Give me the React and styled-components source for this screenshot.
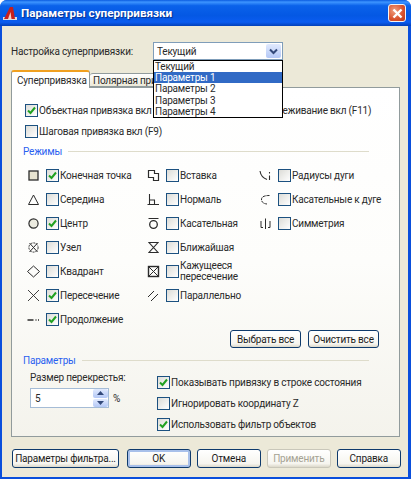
import React from "react";
import styled, { createGlobalStyle } from "styled-components";

const Global = createGlobalStyle`
  html, body { margin: 0; padding: 0; background: #fff; }
  body { font-family: Roboto, "Liberation Sans", Arial, sans-serif; font-size: 10px; letter-spacing: -0.2px; color: #2a2a2a; }
`;

const Window = styled.div`
  width: 411px;
  height: 479px;
  box-sizing: border-box;
  display: flex;
  flex-direction: column;
  border-radius: 7px 7px 0 0;
  background: #0a4fdc;
  padding: 0 3px 2px 2px;
  overflow: hidden;
`;

const TitleBar = styled.div`
  height: 26px;
  flex: none;
  margin: 0 -3px 0 -2px;
  padding: 0 5px 0 3px;
  display: flex;
  align-items: center;
  gap: 4px;
  background: linear-gradient(180deg, #0a5ce0 0%, #3d95ff 8%, #0a62ea 22%, #0458e4 60%, #0a5cf0 85%, #0340b8 100%);
`;

const Title = styled.span`
  flex: 1;
  color: #fff;
  font-size: 11.7px;
  font-weight: bold;
  letter-spacing: 0;
  text-shadow: 1px 1px 1px #0a2f8c;
`;

const CloseButton = styled.div`
  width: 18px;
  height: 18px;
  box-sizing: border-box;
  border: 1px solid #f4f4f4;
  border-radius: 3px;
  background: radial-gradient(circle at 35% 35%, #f0a080, #d8512c 60%, #b83a1c);
  display: flex;
  align-items: center;
  justify-content: center;
`;

const Body = styled.div`
  flex: 1;
  background: #ece9d8;
  padding: 16px 8px 0 9px;
  display: flex;
  flex-direction: column;
`;

const PresetRow = styled.div`
  display: flex;
  align-items: center;
  height: 18px;
`;

const PresetLabel = styled.label`
  width: 142px;
`;

const Combo = styled.div`
  position: relative;
  width: 130px;
  height: 18px;
  box-sizing: border-box;
  border: 1px solid #7f9db9;
  background: #fff;
  display: flex;
  align-items: center;
  padding-left: 3px;
  justify-content: space-between;
`;

const ComboArrow = styled.div`
  width: 15px;
  height: 14px;
  margin-right: 1px;
  border-radius: 2px;
  background: linear-gradient(180deg, #e1eafe, #b4c8f6);
  display: flex;
  align-items: center;
  justify-content: center;
`;

const DropList = styled.ul`
  position: absolute;
  left: -1px;
  top: 17px;
  width: 130px;
  height: 58px;
  box-sizing: border-box;
  margin: 0;
  padding: 0;
  list-style: none;
  background: #fff;
  border: 1px solid #000;
  z-index: 2;
`;

const DropItem = styled.li`
  height: 11.2px;
  line-height: 11px;
  padding-left: 1px;
  background: ${(p) => (p.$active ? "#316ac5" : "transparent")};
  color: ${(p) => (p.$active ? "#fff" : "#2a2a2a")};
`;

const Tabs = styled.div`
  display: flex;
  align-items: flex-start;
  height: 17px;
  margin-top: 10px;
  position: relative;
  z-index: 1;
`;

const Tab = styled.div`
  box-sizing: border-box;
  height: ${(p) => (p.$active ? "18px" : "14px")};
  width: ${(p) => (p.$active ? "79px" : "110px")};
  margin-top: ${(p) => (p.$active ? "0" : "3px")};
  padding: ${(p) => (p.$active ? "3px 0 0 5px" : "1px 0 0 3px")};
  border: 1px solid #919b9c;
  border-bottom: ${(p) => (p.$active ? "none" : "1px solid #919b9c")};
  border-left: ${(p) => (p.$active ? "1px solid #919b9c" : "none")};
  border-top: ${(p) => (p.$active ? "2px solid #f0a020" : "1px solid #919b9c")};
  border-radius: 3px 3px 0 0;
  background: ${(p) => (p.$active ? "#fff" : "linear-gradient(180deg, #fff, #ece9d8)")};
  white-space: nowrap;
  overflow: hidden;
`;

const Panel = styled.div`
  height: 350px;
  box-sizing: border-box;
  flex: none;
  border: 1px solid #919b9c;
  background: linear-gradient(180deg, #fff 0%, #fdfdfb 50%, #f4f3ec 100%);
  padding: 15px 0 0 13px;
  display: flex;
  flex-direction: column;
`;

const TopRow = styled.div`
  display: flex;
  height: 14px;
  margin-bottom: ${(p) => p.$gap}px;
`;

const Check = styled.div`
  display: flex;
  align-items: center;
  gap: 1px;
  width: ${(p) => p.$width || "auto"};
  white-space: nowrap;
`;

const Box = styled.span`
  flex: none;
  width: 11px;
  height: 11px;
  border: 1px solid #1c5180;
  background: linear-gradient(135deg, #dcdcd7, #fff);
  display: flex;
  align-items: center;
  justify-content: center;
`;

const SectionHead = styled.div`
  display: flex;
  align-items: center;
  height: 13px;
  flex: none;
  color: #2a5ff0;
  margin: ${(p) => p.$top || 0}px 30px 0 -2px;
`;

const SectionLine = styled.div`
  margin-left: ${(p) => p.$gap}px;
  flex: 1;
  height: 1px;
  background: #dedccb;
`;

const Modes = styled.div`
  display: grid;
  grid-template-columns: 120px 112px 1fr;
  grid-auto-rows: 24px;
  margin-top: 5px;
  height: 168px;
  flex: none;
`;

const Mode = styled.div`
  display: flex;
  align-items: center;
  gap: 6px;
  padding-left: 2px;
  grid-column: ${(p) => p.$col};
  grid-row: ${(p) => p.$row};
`;

const ModeIcon = styled.svg`
  flex: none;
  width: 13px;
  height: 13px;
  fill: none;
  stroke: #2c2c2c;
`;

const TwoLine = styled.span`
  display: block;
  line-height: 11px;
  white-space: normal;
  width: 90px;
`;

const SelectRow = styled.div`
  display: flex;
  justify-content: flex-end;
  gap: 7px;
  padding-right: 20px;
  margin-top: -1px;
`;

const Button = styled.button`
  box-sizing: border-box;
  flex: none;
  width: ${(p) => p.$width}px;
  height: ${(p) => p.$height || 19}px;
  margin-right: ${(p) => p.$after || 0}px;
  padding: 0;
  font: inherit;
  letter-spacing: inherit;
  color: ${(p) => (p.disabled ? "#a5a293" : "#1c1c1c")};
  border: 1px solid ${(p) => (p.disabled ? "#c9c7ba" : "#0e3a6c")};
  border-radius: 3px;
  background: linear-gradient(180deg, #fff 0%, #f6f5ef 80%, #dcd8ca 100%);
  box-shadow: ${(p) => (p.$default ? "inset 0 0 0 2px #a8c0ea" : "none")};
  white-space: nowrap;
`;

const ParamsRow = styled.div`
  display: flex;
  margin-top: 5px;
`;

const CrossSize = styled.div`
  width: 132px;
  box-sizing: border-box;
  padding-left: 5px;
  display: flex;
  flex-direction: column;
  gap: 5px;
`;

const SpinRow = styled.div`
  display: flex;
  align-items: center;
  gap: 4px;
`;

const Spin = styled.div`
  box-sizing: border-box;
  width: 79px;
  height: 20px;
  border: 1px solid #a5bcd6;
  background: #fff;
  padding-left: 4px;
  display: flex;
  align-items: center;
  justify-content: space-between;
`;

const SpinBtns = styled.div`
  width: 15px;
  height: 18px;
  display: flex;
  flex-direction: column;
  gap: 1px;
`;

const SpinBtn = styled.div`
  flex: 1;
  border-radius: 2px;
  background: linear-gradient(180deg, #e1eafe, #b4c8f6);
  display: flex;
  align-items: center;
  justify-content: center;
`;

const OptionList = styled.div`
  display: flex;
  flex-direction: column;
  gap: 8px;
  margin-top: 4px;
`;

const Footer = styled.div`
  display: flex;
  margin-top: 12px;
  padding-left: 1px;
  gap: 6.5px;
`;

const Tick = () => (
  <svg width="9" height="9" viewBox="0 0 9 9">
    <path d="M1 4.5 L3.5 7 L8 1.5" fill="none" stroke="#21a121" strokeWidth="2" />
  </svg>
);

const CheckItem = ({ checked, children, width }) => (
  <Check $width={width}>
    <Box>{checked && <Tick />}</Box>
    <span>{children}</span>
  </Check>
);

const icons = {
  end: <rect x="2" y="2" width="9" height="9" fill="#e8e4d0" strokeWidth="1.3" />,
  mid: <path d="M6.5 2 L11.5 11.5 H1.5 Z" />,
  center: <circle cx="6.5" cy="6.5" r="4.6" fill="#ecebe0" strokeWidth="1.2" />,
  node: (
    <>
      <circle cx="6.5" cy="6.5" r="4.6" strokeDasharray="2 1" />
      <path d="M2.5 2 L10.5 11 M10.5 2 L2.5 11" />
    </>
  ),
  quad: <path d="M6.5 1 L12.5 6.5 L6.5 12 L0.5 6.5 Z" />,
  cross: <path d="M1 1 L12 12 M12 1 L1 12" strokeWidth="0.9" />,
  ext: <path d="M0.5 7 H6.5 M8.5 7 H9.5 M11 7 H12" strokeWidth="1.4" />,
  ins: <path d="M1.5 1.5 H7.5 V4.5 H11.5 V11.5 H6.5 V8.5 H1.5 Z" strokeWidth="1.2" />,
  perp: <path d="M2.5 1 V11.5 M0.5 11.5 H12 M2.5 7 H7.5 V11.5" strokeWidth="1.1" />,
  tan: (
    <>
      <circle cx="6.5" cy="7.5" r="3.8" strokeWidth="1.3" />
      <path d="M1.5 1.5 H11.5" />
    </>
  ),
  near: <path d="M2 1.5 H11 L2 11.5 H11 Z" strokeWidth="1.1" />,
  apparent: (
    <>
      <rect x="1.5" y="1.5" width="10" height="10" strokeWidth="1.4" />
      <path d="M1.5 1.5 L11.5 11.5 M11.5 1.5 L1.5 11.5" />
    </>
  ),
  par: <path d="M1 8 L7 2 M4 12 L11 5" />,
  radius: <path d="M1 2 Q2 8.5 8 10.5 M10.5 3 V4.5 M10.5 6.5 V11" strokeWidth="1.1" />,
  arcTan: <path d="M10.5 2.5 Q2 2.5 2.5 7 Q3 10.5 8 11" strokeDasharray="3 0.8" />,
  sym: <path d="M2 4 V10.5 H4 M6.5 1.5 V12 M11 4 V10.5 H9" />,
};

const modes = [
  [1, 1, "end", "Конечная точка", true],
  [1, 2, "mid", "Середина"],
  [1, 3, "center", "Центр", true],
  [1, 4, "node", "Узел"],
  [1, 5, "quad", "Квадрант"],
  [1, 6, "cross", "Пересечение", true],
  [1, 7, "ext", "Продолжение", true],
  [2, 1, "ins", "Вставка"],
  [2, 2, "perp", "Нормаль"],
  [2, 3, "tan", "Касательная"],
  [2, 4, "near", "Ближайшая"],
  [2, 5, "apparent", <TwoLine key="a">Кажущееся пересечение</TwoLine>],
  [2, 6, "par", "Параллельно"],
  [3, 1, "radius", "Радиусы дуги"],
  [3, 2, "arcTan", "Касательные к дуге"],
  [3, 3, "sym", "Симметрия"],
];

function App() {
  return (
    <>
      <Global />
      <Window>
        <TitleBar>
          <svg width="14" height="15" viewBox="0 0 14 15">
            <rect x="0" y="11" width="14" height="3" fill="#dcdce0" />
            <path d="M1 13 L7 1 L10 1 L12 13 Z" fill="#c8201c" />
            <path d="M5 13 L7.5 6 L8.5 13 Z" fill="#f4d0c8" />
          </svg>
          <Title>Параметры суперпривязки</Title>
          <CloseButton>
            <svg width="11" height="11" viewBox="0 0 11 11">
              <path d="M1.5 1.5 L9.5 9.5 M9.5 1.5 L1.5 9.5" stroke="#fff" strokeWidth="2.4" />
            </svg>
          </CloseButton>
        </TitleBar>
        <Body>
          <PresetRow>
            <PresetLabel>Настройка суперпривязки:</PresetLabel>
            <Combo>
              <span>Текущий</span>
              <ComboArrow>
                <svg width="9" height="7" viewBox="0 0 9 7">
                  <path d="M1 1.5 L4.5 5 L8 1.5" fill="none" stroke="#33497a" strokeWidth="2" />
                </svg>
              </ComboArrow>
              <DropList>
                <DropItem>Текущий</DropItem>
                <DropItem $active>Параметры 1</DropItem>
                <DropItem>Параметры 2</DropItem>
                <DropItem>Параметры 3</DropItem>
                <DropItem>Параметры 4</DropItem>
              </DropList>
            </Combo>
          </PresetRow>
          <Tabs>
            <Tab $active>Суперпривязка</Tab>
            <Tab>Полярная привязка</Tab>
          </Tabs>
          <Panel>
            <TopRow $gap={7}>
              <CheckItem checked width="172px">Объектная привязка вкл (F3)</CheckItem>
              <CheckItem>Объектное отслеживание вкл (F11)</CheckItem>
            </TopRow>
            <TopRow $gap={7}>
              <CheckItem>Шаговая привязка вкл (F9)</CheckItem>
            </TopRow>
            <SectionHead>
              Режимы
              <SectionLine $gap={6} />
            </SectionHead>
            <Modes>
              {modes.map(([col, row, icon, label, checked]) => (
                <Mode key={icon} $col={col} $row={row}>
                  <ModeIcon viewBox="0 0 13 13">{icons[icon]}</ModeIcon>
                  <CheckItem checked={checked}>{label}</CheckItem>
                </Mode>
              ))}
            </Modes>
            <SelectRow>
              <Button $width={71} $height={18}>Выбрать все</Button>
              <Button $width={71} $height={18}>Очистить все</Button>
            </SelectRow>
            <SectionHead $top={6}>
              Параметры
              <SectionLine $gap={6} />
            </SectionHead>
            <ParamsRow>
              <CrossSize>
                <span>Размер перекрестья:</span>
                <SpinRow>
                  <Spin>
                    5
                    <SpinBtns>
                      <SpinBtn>
                        <svg width="7" height="4" viewBox="0 0 7 4">
                          <path d="M0 4 L3.5 0 L7 4 Z" fill="#33497a" />
                        </svg>
                      </SpinBtn>
                      <SpinBtn>
                        <svg width="7" height="4" viewBox="0 0 7 4">
                          <path d="M0 0 L3.5 4 L7 0 Z" fill="#33497a" />
                        </svg>
                      </SpinBtn>
                    </SpinBtns>
                  </Spin>
                  %
                </SpinRow>
              </CrossSize>
              <OptionList>
                <CheckItem checked>Показывать привязку в строке состояния</CheckItem>
                <CheckItem>Игнорировать координату Z</CheckItem>
                <CheckItem checked>Использовать фильтр объектов</CheckItem>
              </OptionList>
            </ParamsRow>
          </Panel>
          <Footer>
            <Button $width={107} $after={1.5}>Параметры фильтра...</Button>
            <Button $width={63.5} $default>OK</Button>
            <Button $width={63.5}>Отмена</Button>
            <Button $width={63.5} disabled>Применить</Button>
            <Button $width={63.5}>Справка</Button>
          </Footer>
        </Body>
      </Window>
    </>
  );
}

export default App;
